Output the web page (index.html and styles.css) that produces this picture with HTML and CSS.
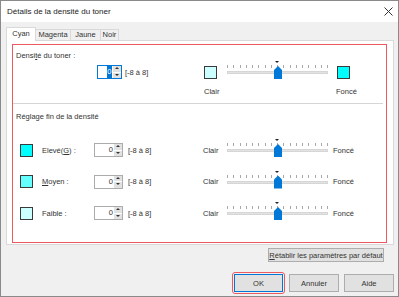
FILE: index.html
```html
<!DOCTYPE html>
<html lang="fr">
  <head>
    <meta charset="UTF-8" />
    <meta name="viewport" content="width=device-width, initial-scale=1.0" />
    <title>Détails de la densité du toner</title>
    <link rel="stylesheet" href="styles.css">
  </head>
  <body>
    <div class="window">
      <!-- barre de titre -->
      <div class="titlebar">
        <span class="title">Détails de la densité du toner</span>
        <svg class="close" width="9" height="9" viewBox="0 0 9 9">
          <path d="M0.5 0.5 L8.5 8.5 M8.5 0.5 L0.5 8.5" stroke="#333" stroke-width="1" fill="none" />
        </svg>
      </div>

      <div class="body">
        <!-- onglets -->
        <div class="tabs">
          <div class="tab active">Cyan</div>
          <div class="tab w-magenta">Magenta</div>
          <div class="tab w-jaune">Jaune</div>
          <div class="tab w-noir">Noir</div>
        </div>

        <div class="panel">
          <div class="highlight">
            <div class="caption">Densi<u>t</u>é du toner :</div>

            <div class="grid main-row">
              <div class="spin focus cell-spin">
                <span class="val"><span class="sel">0</span></span>
                <span class="arrows"><i class="up"></i><i class="down"></i></span>
              </div>
              <span class="range cell-range">[-8 à 8]</span>
              <span class="swatch c-light cell-clair"></span>
              <div class="slider cell-slider">
                <i class="mark"></i><i class="ticks"></i><i class="track"></i><i class="thumb"></i>
              </div>
              <span class="swatch c-dark cell-fonce"></span>
            </div>

            <div class="grid ends">
              <span class="cell-clair">Clair</span>
              <span class="cell-fonce">Foncé</span>
            </div>

            <div class="sep"></div>

            <div class="caption fine">Réglage fin de la densité</div>

            <div class="grid row">
              <span class="swatch c-dark"></span>
              <span>Elevé(<u>G</u>) :</span>
              <div class="spin wide">
                <span class="val">0</span>
                <span class="arrows"><i class="up"></i><i class="down"></i></span>
              </div>
              <span>[-8 à 8]</span>
              <span>Clair</span>
              <div class="slider">
                <i class="mark"></i><i class="ticks"></i><i class="track"></i><i class="thumb"></i>
              </div>
              <span>Foncé</span>
            </div>

            <div class="grid row">
              <span class="swatch c-mid"></span>
              <span><u>M</u>oyen :</span>
              <div class="spin wide">
                <span class="val">0</span>
                <span class="arrows"><i class="up"></i><i class="down"></i></span>
              </div>
              <span>[-8 à 8]</span>
              <span>Clair</span>
              <div class="slider">
                <i class="mark"></i><i class="ticks"></i><i class="track"></i><i class="thumb"></i>
              </div>
              <span>Foncé</span>
            </div>

            <div class="grid row">
              <span class="swatch c-light"></span>
              <span>Faible :</span>
              <div class="spin wide">
                <span class="val">0</span>
                <span class="arrows"><i class="up"></i><i class="down"></i></span>
              </div>
              <span>[-8 à 8]</span>
              <span>Clair</span>
              <div class="slider">
                <i class="mark"></i><i class="ticks"></i><i class="track"></i><i class="thumb"></i>
              </div>
              <span>Foncé</span>
            </div>
          </div>
        </div>

        <!-- boutons -->
        <div class="reset-row">
          <button class="btn reset"><u>R</u>établir les paramètres par défaut</button>
        </div>
        <div class="actions">
          <div class="ok-mark">
            <button class="btn default">OK</button>
          </div>
          <button class="btn">Annuler</button>
          <button class="btn">Aide</button>
        </div>
      </div>
    </div>
  </body>
</html>
```

FILE: styles.css
```css
* {
  margin: 0;
  padding: 0;
  box-sizing: border-box;
}
html,
body {
  font-family: "Liberation Sans", Arial, sans-serif;
  font-size: 7.5px;
  color: #333;
  background-color: #fff;
}
.window {
  width: 399px;
  height: 297px;
  border: 1px solid #8a8a8a;
  background-color: #f0f0f0;
  display: flex;
  flex-direction: column;
}
.titlebar {
  height: 21px;
  background-color: #fff;
  display: flex;
  align-items: center;
  justify-content: space-between;
  padding: 0 5px 0 6px;
}
.title {
  font-size: 8px;
  color: #222;
}
.close {
  display: block;
}
.body {
  flex: 1;
  padding: 5px 4px 0 5px;
}

/* onglets */
.tabs {
  display: flex;
  align-items: flex-end;
  height: 13px;
}
.tab {
  height: 11px;
  line-height: 10px;
  border: 1px solid #d9d9d9;
  border-bottom: none;
  background-color: #f0f0f0;
  text-align: center;
  margin-left: -1px;
}
.tab.active {
  position: relative;
  z-index: 1;
  height: 14px;
  line-height: 12px;
  width: 30px;
  margin-left: 0;
  margin-bottom: -1px;
  background-color: #fff;
}
.w-magenta {
  width: 36px;
}
.w-jaune {
  width: 31px;
}
.w-noir {
  width: 19px;
}
.panel {
  background-color: #fff;
  border: 1px solid #d9d9d9;
  padding: 3px 6px 1px 5px;
}
.highlight {
  border: 1px solid #ea5a5e;
  padding: 6px 0 18px 0;
}
.caption {
  line-height: 10px;
  padding-left: 3px;
}
.caption.fine {
  margin-top: 8px;
}

/* grille des lignes */
.grid {
  display: grid;
  grid-template-columns: 22px 52px 34px 75px 24px 106px auto;
  align-items: center;
  padding-left: 7px;
}
.main-row {
  height: 22px;
}
.cell-spin {
  grid-column: 3;
  margin-left: 3px;
}
.cell-range {
  grid-column: 4;
  margin-left: -3px;
}
.cell-clair {
  grid-column: 5;
  margin-left: 1px;
}
.cell-slider {
  grid-column: 6;
}
.cell-fonce {
  grid-column: 7;
  margin-left: 4px;
}
.ends {
  margin-top: 4px;
  line-height: 10px;
}
.ends .cell-fonce {
  margin-left: 3px;
}
.sep {
  height: 1px;
  background-color: #d5d5d5;
  margin: 6px 3px 0 0;
}
.row {
  height: 22px;
  margin-top: 9.5px;
}
.caption.fine + .row {
  margin-top: 17px;
}

/* échantillons de couleur */
.swatch {
  display: block;
  width: 13px;
  height: 13px;
  border: 1px solid #3a3a3a;
}
.c-dark {
  background-color: #00ffff;
}
.c-mid {
  background-color: #66ffff;
}
.c-light {
  background-color: #ccffff;
}

/* champ numérique */
.spin {
  display: flex;
  width: 25px;
  height: 14px;
  border: 1px solid #acacac;
  background-color: #fff;
}
.spin.wide {
  width: 29px;
}
.spin.focus {
  border-color: #0078d7;
}
.spin .val {
  flex: 1;
  text-align: right;
  line-height: 12px;
  padding-right: 1px;
}
.spin .sel {
  display: inline-block;
  background-color: #0078d7;
  color: #fff;
  padding: 0 0.5px;
}
.arrows {
  width: 8px;
  display: flex;
  flex-direction: column;
  gap: 1px;
  background-color: #fff;
}
.arrows i {
  flex: 1;
  background-color: #e1e1e1;
  position: relative;
}
.arrows i::after {
  content: "";
  position: absolute;
  left: 2px;
  top: 1px;
  border-left: 2px solid transparent;
  border-right: 2px solid transparent;
}
.arrows .up::after {
  border-bottom: 2px solid #333;
}
.arrows .down::after {
  border-top: 2px solid #333;
}

/* curseur */
.slider {
  position: relative;
  width: 101px;
  height: 22px;
}
.slider i {
  position: absolute;
  display: block;
}
.slider .mark {
  left: 48px;
  top: 0;
  border-left: 2px solid transparent;
  border-right: 2px solid transparent;
  border-top: 2px solid #222;
}
.slider .ticks {
  left: 0;
  top: 4px;
  width: 101px;
  height: 3px;
  background: repeating-linear-gradient(to right, #a8a8a8 0 1px, transparent 1px 6.25px);
}
.slider .track {
  left: 0;
  top: 10px;
  width: 101px;
  height: 3px;
  background-color: #e2e2e2;
  border: 1px solid #d6d6d6;
}
.slider .thumb {
  left: 47px;
  top: 5px;
  width: 8px;
  height: 13px;
  background-color: #0078d7;
  clip-path: polygon(50% 0, 100% 30%, 100% 100%, 0 100%, 0 30%);
}

/* boutons */
.btn {
  font-family: inherit;
  font-size: 7.5px;
  color: #333;
  background-color: #e1e1e1;
  border: 1px solid #adadad;
  width: 50px;
  height: 18px;
}
.reset-row {
  display: flex;
  justify-content: flex-end;
  margin-top: 3px;
  padding-right: 10px;
}
.btn.reset {
  width: 116px;
  height: 14px;
}
.actions {
  display: flex;
  justify-content: flex-end;
  align-items: center;
  gap: 5px;
  margin-top: 10px;
}
.ok-mark {
  border: 1px solid #ea5a5e;
  border-radius: 3px;
  padding: 1px;
  margin-right: -1px;
}
.btn.default {
  border-color: #0078d7;
  width: 49px;
  display: block;
}
```
